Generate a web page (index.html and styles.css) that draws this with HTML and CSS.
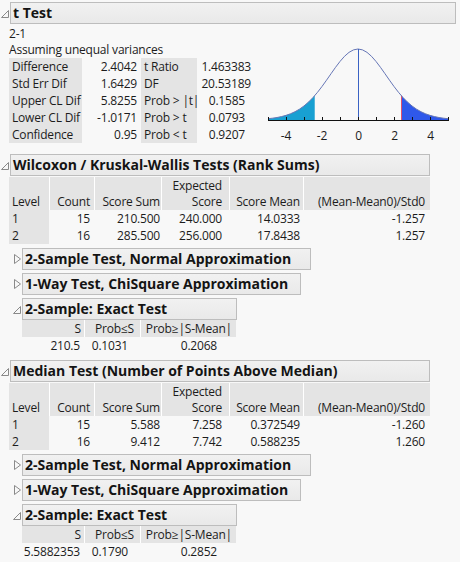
FILE: index.html
```html
<!DOCTYPE html>
<html>
<head>
<meta charset="utf-8">
<link rel="stylesheet" href="styles.css">
</head>
<body>
<div class="report">

  <div class="node">
    <div class="node-head">
      <svg class="tri" viewBox="0 0 10 22"><polygon class="tri-open" points="8.5,8.5 8.5,15.5 1.5,15.5"/></svg>
      <div class="title w-ttest">t Test</div>
    </div>
    <div class="ttest-body">
      <div class="ttest-left">
        <div class="line l1">2-1</div>
        <div class="line l2">Assuming unequal variances</div>
        <table class="grid tt">
          <colgroup><col class="tc1"><col class="tc2"><col class="tc3"><col class="tc4"></colgroup>
          <tr><td class="lab">Difference</td><td class="num p4">2.4042</td><td class="lab">t Ratio</td><td class="num p2">1.463383</td></tr>
          <tr><td class="lab">Std Err Dif</td><td class="num p4">1.6429</td><td class="lab">DF</td><td class="num p2">20.53189</td></tr>
          <tr><td class="lab">Upper CL Dif</td><td class="num p4">5.8255</td><td class="lab">Prob &gt; |t|</td><td class="num p8">0.1585</td></tr>
          <tr><td class="lab">Lower CL Dif</td><td class="num p4">-1.0171</td><td class="lab">Prob &gt; t</td><td class="num p8">0.0793</td></tr>
          <tr><td class="lab">Confidence</td><td class="num p4">0.95</td><td class="lab">Prob &lt; t</td><td class="num p8">0.9207</td></tr>
        </table>
      </div>
      <svg class="tplot" width="196" height="120" viewBox="0 0 196 120">
        <polygon class="tail-l" points="8,95 8,93.71 12.5,93.2 17,92.52 21.5,91.59 26,90.37 30.5,88.78 35,86.73 39.5,84.14 44,80.95 48.5,77.09 53,72.53 54.72,70.6 54.72,95"/>
        <polygon class="tail-r" points="141.28,95 141.28,70.6 143,72.53 147.5,77.09 152,80.95 156.5,84.14 161,86.73 165.5,88.78 170,90.37 174.5,91.59 179,92.52 183.5,93.2 188,93.71 188,95"/>
        <line class="obs" x1="141.5" y1="70.6" x2="141.5" y2="95"/>
        <polyline class="curve" points="8,93.71 12.5,93.2 17,92.52 21.5,91.59 26,90.37 30.5,88.78 35,86.73 39.5,84.14 44,80.95 48.5,77.09 53,72.53 57.5,67.3 62,61.47 66.5,55.21 71,48.74 75.5,42.37 80,36.44 84.5,31.31 89,27.36 93.5,24.86 98,24 102.5,24.86 107,27.36 111.5,31.31 116,36.44 120.5,42.37 125,48.74 129.5,55.21 134,61.47 138.5,67.3 143,72.53 147.5,77.09 152,80.95 156.5,84.14 161,86.73 165.5,88.78 170,90.37 174.5,91.59 179,92.52 183.5,93.2 188,93.71"/>
        <line class="zero" x1="98.5" y1="24" x2="98.5" y2="95"/>
        <line class="axis" x1="8" y1="95.5" x2="189" y2="95.5"/>
        <path class="ticks" d="M8.5 92v3M26.5 92v3M44.5 92v3M62.5 92v3M80.5 92v3M98.5 92v3M116.5 92v3M134.5 92v3M152.5 92v3M170.5 92v3M188.5 92v3"/>
        <text class="tlab" x="26" y="115">-4</text>
        <text class="tlab" x="62" y="115">-2</text>
        <text class="tlab" x="98.5" y="115">0</text>
        <text class="tlab" x="134.5" y="115">2</text>
        <text class="tlab" x="170.5" y="115">4</text>
      </svg>
    </div>
  </div>

  <div class="node gap-wil">
    <div class="node-head">
      <svg class="tri" viewBox="0 0 10 22"><polygon class="tri-open" points="8.5,8.5 8.5,15.5 1.5,15.5"/></svg>
      <div class="title w-main">Wilcoxon / Kruskal-Wallis Tests (Rank Sums)</div>
    </div>
    <div class="body-main">
      <table class="grid rs">
        <colgroup><col class="rc1"><col class="rc2"><col class="rc3"><col class="rc4"><col class="rc5"><col class="rc6"></colgroup>
        <tr class="hrow"><th class="lv">Level</th><th class="cc">Count</th><th class="cs">Score Sum</th><th class="ce">Expected<br>Score</th><th class="cm">Score Mean</th><th class="cz">(Mean-Mean0)/Std0</th></tr>
        <tr><td class="lv">1</td><td class="cc">15</td><td class="cs">210.500</td><td class="ce">240.000</td><td class="cm">14.0333</td><td class="cz">-1.257</td></tr>
        <tr><td class="lv">2</td><td class="cc">16</td><td class="cs">285.500</td><td class="ce">256.000</td><td class="cm">17.8438</td><td class="cz">1.257</td></tr>
      </table>
    </div>

    <div class="node sub gap-first">
      <div class="node-head">
        <svg class="tri" viewBox="0 0 10 22"><polygon class="tri-closed" points="2.5,6.5 8.5,11 2.5,15.5"/></svg>
        <div class="title w-norm">2-Sample Test, Normal Approximation</div>
      </div>
    </div>
    <div class="node sub gap-sib">
      <div class="node-head">
        <svg class="tri" viewBox="0 0 10 22"><polygon class="tri-closed" points="2.5,6.5 8.5,11 2.5,15.5"/></svg>
        <div class="title w-chi">1-Way Test, ChiSquare Approximation</div>
      </div>
    </div>
    <div class="node sub gap-sib">
      <div class="node-head">
        <svg class="tri" viewBox="0 0 10 22"><polygon class="tri-open" points="8.5,8.5 8.5,15.5 1.5,15.5"/></svg>
        <div class="title w-exact">2-Sample: Exact Test</div>
      </div>
      <div class="body-sub">
        <table class="grid ex">
          <colgroup><col class="ec1"><col class="ec2"><col class="ec3"></colgroup>
          <tr class="hrow1"><th class="eh1">S</th><th class="eh2">Prob≤S</th><th class="eh3">Prob≥|S-Mean|</th></tr>
          <tr><td class="ed1">210.5</td><td class="ed2">0.1031</td><td class="ed3">0.2068</td></tr>
        </table>
      </div>
    </div>
  </div>

  <div class="node gap-med">
    <div class="node-head">
      <svg class="tri" viewBox="0 0 10 22"><polygon class="tri-open" points="8.5,8.5 8.5,15.5 1.5,15.5"/></svg>
      <div class="title w-main">Median Test (Number of Points Above Median)</div>
    </div>
    <div class="body-main">
      <table class="grid rs">
        <colgroup><col class="rc1"><col class="rc2"><col class="rc3"><col class="rc4"><col class="rc5"><col class="rc6"></colgroup>
        <tr class="hrow"><th class="lv">Level</th><th class="cc">Count</th><th class="cs">Score Sum</th><th class="ce">Expected<br>Score</th><th class="cm">Score Mean</th><th class="cz">(Mean-Mean0)/Std0</th></tr>
        <tr><td class="lv">1</td><td class="cc">15</td><td class="cs">5.588</td><td class="ce">7.258</td><td class="cm">0.372549</td><td class="cz">-1.260</td></tr>
        <tr><td class="lv">2</td><td class="cc">16</td><td class="cs">9.412</td><td class="ce">7.742</td><td class="cm">0.588235</td><td class="cz">1.260</td></tr>
      </table>
    </div>

    <div class="node sub gap-first">
      <div class="node-head">
        <svg class="tri" viewBox="0 0 10 22"><polygon class="tri-closed" points="2.5,6.5 8.5,11 2.5,15.5"/></svg>
        <div class="title w-norm">2-Sample Test, Normal Approximation</div>
      </div>
    </div>
    <div class="node sub gap-sib">
      <div class="node-head">
        <svg class="tri" viewBox="0 0 10 22"><polygon class="tri-closed" points="2.5,6.5 8.5,11 2.5,15.5"/></svg>
        <div class="title w-chi">1-Way Test, ChiSquare Approximation</div>
      </div>
    </div>
    <div class="node sub gap-sib">
      <div class="node-head">
        <svg class="tri" viewBox="0 0 10 22"><polygon class="tri-open" points="8.5,8.5 8.5,15.5 1.5,15.5"/></svg>
        <div class="title w-exact">2-Sample: Exact Test</div>
      </div>
      <div class="body-sub">
        <table class="grid ex">
          <colgroup><col class="ec1"><col class="ec2"><col class="ec3"></colgroup>
          <tr class="hrow1"><th class="eh1">S</th><th class="eh2">Prob≤S</th><th class="eh3">Prob≥|S-Mean|</th></tr>
          <tr><td class="ed1">5.5882353</td><td class="ed2">0.1790</td><td class="ed3">0.2852</td></tr>
        </table>
      </div>
    </div>
  </div>

</div>
</body>
</html>
```

FILE: styles.css
```css
html, body {
  margin: 0;
  padding: 0;
  background: #f8f8f8;
}
body {
  font-family: "Open Sans", "Noto Sans", "DejaVu Sans", sans-serif;
  font-size: 12px;
  letter-spacing: -0.2px;
  color: #1c1c1c;
  overflow: hidden;
}
.report {
  padding-top: 2px;
}

/* outline nodes */
.node-head {
  display: flex;
  align-items: center;
  height: 22px;
}
.tri {
  width: 10px;
  height: 22px;
  flex: none;
}
.tri-open, .tri-closed {
  fill: none;
  stroke: #8a8a8a;
  stroke-width: 1;
  stroke-linejoin: miter;
}
.title {
  box-sizing: border-box;
  height: 22px;
  border: 1px solid #bdbdbd;
  background: linear-gradient(#f1f1f1, #e9e9e9);
  font-weight: bold;
  font-size: 14px;
  letter-spacing: 0;
  line-height: 19px;
  padding-left: 2px;
  white-space: nowrap;
  overflow: hidden;
  color: #141414;
}
.w-ttest { width: 446px; }
.w-main { width: 420px; }
.w-norm { width: 289px; }
.w-chi { width: 279px; }
.w-exact { width: 215px; }

.sub { margin-left: 12px; }
.gap-wil { margin-top: 9px; }
.gap-med { margin-top: 6px; }
.gap-first { margin-top: 4px; }
.gap-sib { margin-top: 3px; }

.body-main { margin-left: 9px; margin-top: 1px; }
.body-sub { margin-left: 10px; margin-top: 0; }

/* t test */
.ttest-body {
  display: flex;
  margin-left: 9px;
  margin-top: 1px;
}
.ttest-left {
  width: 251px;
  flex: none;
}
.line { white-space: nowrap; }
.l1 { height: 17px; line-height: 17px; }
.l2 { height: 16px; line-height: 16px; }
.tplot { flex: none; display: block; }

.tail-l { fill: #18a0d2; }
.tail-r { fill: #2f58ea; }
.obs { stroke: #e0506a; stroke-width: 1; }
.curve { fill: none; stroke: #6676b6; stroke-width: 1; }
.zero { stroke: #3a62c4; stroke-width: 1; }
.axis { stroke: #111; stroke-width: 1; }
.ticks { stroke: #111; stroke-width: 1; fill: none; }
.tlab {
  font-family: "Open Sans", "Noto Sans", sans-serif;
  font-size: 12px;
  fill: #1c1c1c;
  text-anchor: middle;
}

/* tables */
.grid {
  border-collapse: separate;
  border-spacing: 0;
  table-layout: fixed;
}
.grid td, .grid th {
  padding: 0;
  height: 17px;
  line-height: 17px;
  white-space: nowrap;
  font-weight: normal;
  text-align: right;
  box-sizing: border-box;
  overflow: visible;
}

.tt { width: 244px; }
.tc1 { width: 73px; }
.tc2 { width: 59px; }
.tc3 { width: 56px; }
.tc4 { width: 56px; }
.tt .lab {
  background: #e4e4e4;
  text-align: left;
  padding-left: 3px;
}
.tt .p4 { padding-right: 4px; }
.tt .p2 { padding-right: 2px; }
.tt .p8 { padding-right: 8px; }

.rs { width: 421px; }
.rc1 { width: 40px; }
.rc2 { width: 45px; }
.rc3 { width: 67px; }
.rc4 { width: 68px; }
.rc5 { width: 74px; }
.rc6 { width: 127px; }
.rs .hrow th {
  height: 33px;
  line-height: 16px;
  vertical-align: bottom;
  background: #e4e4e4;
  border-left: 1px solid #ffffff;
}
.rs .hrow th.lv { border-left: none; }
.rs .lv {
  background: #e4e4e4;
  text-align: left;
  padding-left: 3px;
}
.rs .cc { padding-right: 4px; }
.rs .cs { padding-right: 1px; }
.rs .ce { padding-right: 7px; }
.rs .cm { padding-right: 3px; }
.rs .cz { padding-right: 5px; }

.ex { width: 214px; }
.ec1 { width: 62px; }
.ec2 { width: 56px; }
.ec3 { width: 96px; }
.ex .hrow1 th {
  background: #e4e4e4;
  border-left: 1px solid #ffffff;
}
.ex .hrow1 th.eh1 { border-left: none; }
.eh1 { padding-right: 3px !important; }
.eh2 { padding-right: 6px !important; }
.eh3 { padding-right: 4px !important; }
.ed1 { padding-right: 4px !important; }
.ed2 { padding-right: 12px !important; }
.ed3 { padding-right: 19px !important; }
```
